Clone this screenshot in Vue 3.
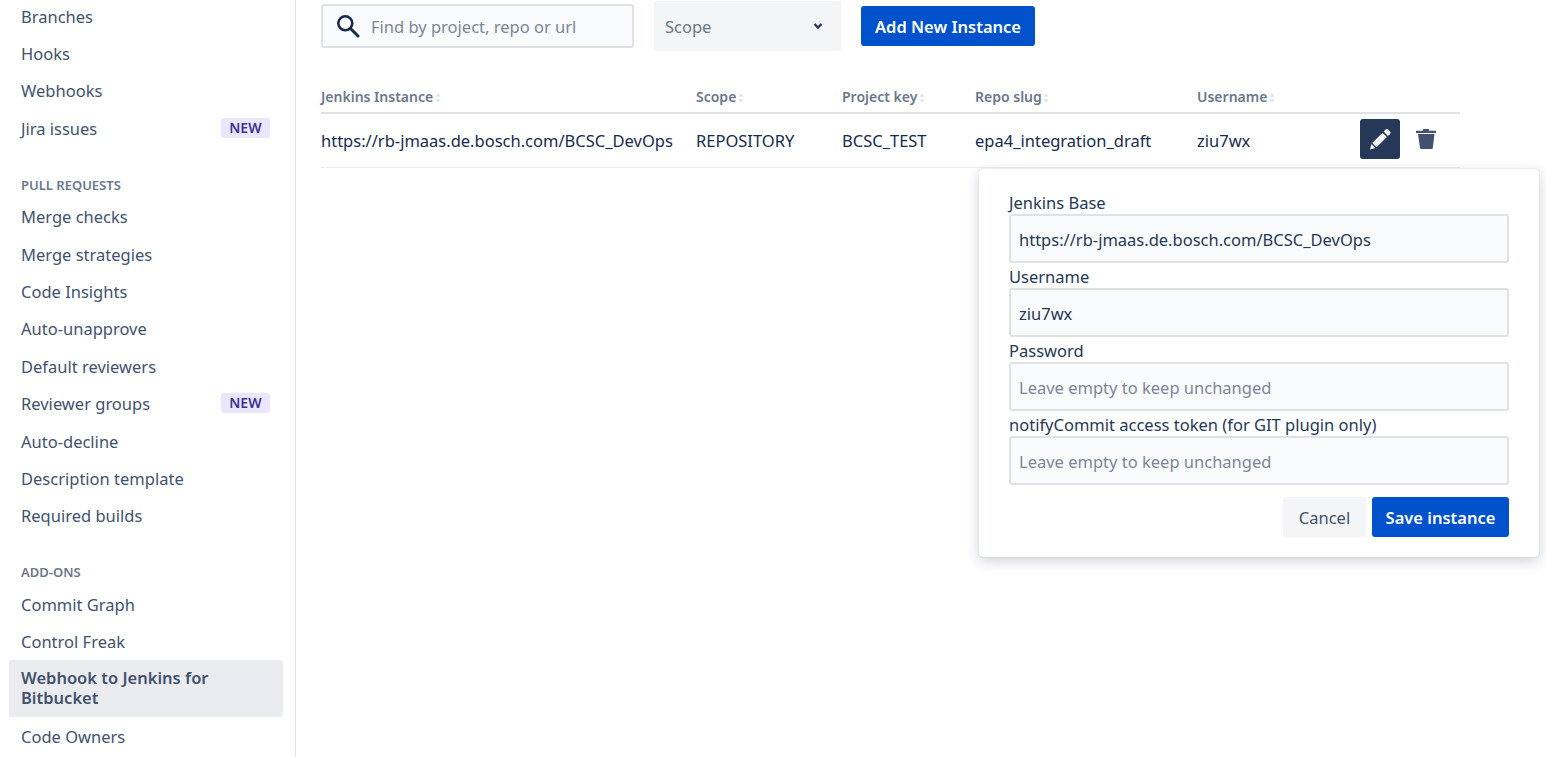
<template>
  <div class="page">
    <aside class="sidebar">
      <nav class="nav" v-for="group in navGroups" :key="group.title">
        <h4 v-if="group.title">{{ group.title }}</h4>
        <a
          v-for="item in group.items"
          :key="item.label"
          class="nav-item"
          :class="{ active: item.active }"
        >
          <span>{{ item.label }}</span>
          <span v-if="item.isNew" class="badge">NEW</span>
        </a>
      </nav>
    </aside>

    <main class="content">
      <div class="toolbar">
        <div class="search">
          <svg width="24" height="24" viewBox="0 0 24 24" fill="none" stroke="#172b4d" stroke-width="2.6">
            <circle cx="9.3" cy="9.3" r="7" />
            <path d="M14.800 14.800 22 22" stroke-linecap="round" stroke-width="3" />
          </svg>
          <span class="search-text">Find by project, repo or url</span>
        </div>
        <div class="scope">
          <span>Scope</span>
          <svg width="12" height="12" viewBox="0 0 12 12" fill="none" stroke="#253858" stroke-width="2.4">
            <path d="M2.500 4 6 7.500 9.500 4" />
          </svg>
        </div>
        <button class="btn primary add">Add New Instance</button>
      </div>

      <div class="table">
        <div class="row head">
          <div v-for="col in columns" :key="col" class="cell">
            {{ col }}
            <svg class="sort" width="6" height="10" viewBox="0 0 6 10" fill="#dfe1e6">
              <path d="M3 0.5 5.6 3.8H.4ZM3 9.5 .4 6.2H5.6Z" />
            </svg>
          </div>
          <div class="cell"></div>
        </div>
        <div class="row body">
          <div class="cell">https://rb-jmaas.de.bosch.com/BCSC_DevOps</div>
          <div class="cell">REPOSITORY</div>
          <div class="cell">BCSC_TEST</div>
          <div class="cell">epa4_integration_draft</div>
          <div class="cell">ziu7wx</div>
          <div class="cell actions">
            <button class="edit">
              <svg width="24" height="24" viewBox="0 0 24 24" fill="#f4f5f7">
                <path d="M15.600 4.600 17.700 2.600C18.400 1.900 19.400 1.900 20.100 2.600L22 4.500C22.700 5.200 22.700 6.200 22 6.900L20 8.900Z" />
                <path d="M14.500 5.700 18.900 10 8.600 20.300 4.200 15.900Z" />
                <path d="M3.400 17 7.400 21.100 2 22.400Z" />
              </svg>
            </button>
            <svg class="trash" width="20" height="20" viewBox="0 0 20 20" fill="#42526e">
              <path d="M7 .6C7 .2 7.300 0 7.700 0h4.600c.4 0 .7.2.7.6V1.800h7V4H0V1.800h7Z" />
              <path d="M2 5H18.500L16.800 19q-.1 1-1 1H5q-.9 0-1-1Z" />
            </svg>
          </div>
        </div>

        <form class="popup" @submit.prevent>
          <template v-for="field in fields" :key="field.label">
            <label>{{ field.label }}</label>
            <div class="input" :class="{ placeholder: !field.value }">
              {{ field.value || 'Leave empty to keep unchanged' }}
            </div>
          </template>
          <div class="popup-actions">
            <button class="btn cancel">Cancel</button>
            <button class="btn primary save">Save instance</button>
          </div>
        </form>
      </div>
    </main>
  </div>
</template>

<script setup>
const navGroups = [
  {
    title: '',
    items: [
      { label: 'Branches' },
      { label: 'Hooks' },
      { label: 'Webhooks' },
      { label: 'Jira issues', isNew: true }
    ]
  },
  {
    title: 'PULL REQUESTS',
    items: [
      { label: 'Merge checks' },
      { label: 'Merge strategies' },
      { label: 'Code Insights' },
      { label: 'Auto-unapprove' },
      { label: 'Default reviewers' },
      { label: 'Reviewer groups', isNew: true },
      { label: 'Auto-decline' },
      { label: 'Description template' },
      { label: 'Required builds' }
    ]
  },
  {
    title: 'ADD-ONS',
    items: [
      { label: 'Commit Graph' },
      { label: 'Control Freak' },
      { label: 'Webhook to Jenkins for Bitbucket', active: true },
      { label: 'Code Owners' }
    ]
  }
]

const columns = ['Jenkins Instance', 'Scope', 'Project key', 'Repo slug', 'Username']

const fields = [
  { label: 'Jenkins Base', value: 'https://rb-jmaas.de.bosch.com/BCSC_DevOps' },
  { label: 'Username', value: 'ziu7wx' },
  { label: 'Password', value: '' },
  { label: 'notifyCommit access token (for GIT plugin only)', value: '' }
]
</script>

<style>
html,
body {
  margin: 0;
  overflow: hidden;
  background: #fff;
}
</style>

<style scoped>
.page {
  display: flex;
  width: 1546px;
  height: 757px;
  overflow: hidden;
  font-family: "Noto Sans", "Open Sans", sans-serif;
  font-size: 16.5px;
  color: #172b4d;
}

.sidebar {
  box-sizing: border-box;
  width: 296px;
  flex: none;
  padding: 0 12px 0 9px;
  border-right: 1px solid #dfe1e6;
  margin-top: -2px;
}

.nav h4 {
  margin: 24px 0 0;
  padding: 0 12px;
  height: 27px;
  line-height: 27px;
  font-size: 13px;
  font-weight: 600;
  color: #6b778c;
}

.nav-item {
  display: flex;
  align-items: center;
  justify-content: space-between;
  box-sizing: border-box;
  min-height: 37.4px;
  padding: 8.5px 13px 8.5px 12px;
  line-height: 20px;
  color: #42526e;
  border-radius: 3px;
}

.nav-item.active {
  background: #ebecf0;
  font-weight: 600;
  margin: -1px 0 1px;
}

.badge {
  padding: 0 8.5px;
  height: 20px;
  line-height: 20px;
  margin: -1px 0 1px;
  font-size: 14px;
  font-weight: 600;
  color: #403294;
  background: #eae6ff;
  border-radius: 3px;
}

.content {
  flex: 1;
  padding: 1px 0 0 25px;
}

.toolbar {
  display: flex;
  align-items: center;
  height: 50px;
}

.search {
  box-sizing: border-box;
  display: flex;
  align-items: center;
  gap: 11px;
  width: 313px;
  height: 44px;
  padding: 0 13px;
  background: #fafbfc;
  border: 2px solid #dfe1e6;
  border-radius: 3px;
}

.search-text {
  color: #7a869a;
}

.scope {
  box-sizing: border-box;
  display: flex;
  align-items: center;
  justify-content: space-between;
  width: 187px;
  height: 50px;
  margin-left: 20px;
  padding: 0 17px 0 11px;
  color: #6b778c;
  background: #f4f5f7;
  border-radius: 3px;
}

.btn {
  height: 40px;
  padding: 0;
  border: none;
  border-radius: 3px;
  font-family: inherit;
  font-size: 16.5px;
}

.primary {
  color: #fff;
  font-weight: 600;
  background: #0052cc;
}

.add {
  width: 174px;
  margin-left: 20px;
}

.table {
  position: relative;
  width: 1139px;
  margin-top: 30px;
}

.row {
  display: grid;
  grid-template-columns: 375px 146px 133px 222px 163px 100px;
  align-items: center;
}

.head {
  height: 31px;
  border-bottom: 2px solid #dfe1e6;
  font-size: 14px;
  font-weight: 600;
  color: #6b778c;
}

.body {
  height: 52px;
  border-bottom: 1px solid #ebecf0;
  padding-bottom: 1px;
}

.sort {
  margin-left: -2px;
  vertical-align: -1px;
}

.actions {
  display: flex;
  align-items: center;
  gap: 16px;
  margin-bottom: 2px;
}

.edit {
  display: flex;
  align-items: center;
  justify-content: center;
  width: 40px;
  height: 40px;
  padding: 0;
  border: none;
  border-radius: 3px;
  background: #253858;
}

.popup {
  position: absolute;
  top: 88px;
  left: 658px;
  box-sizing: border-box;
  width: 560px;
  height: 388px;
  padding: 20px 30px 0;
  background: #fff;
  border-radius: 4px;
  box-shadow: 0 4px 14px rgba(9, 30, 66, 0.2), 0 0 1px rgba(9, 30, 66, 0.3);
}

.popup label {
  display: block;
  height: 25px;
  line-height: 27px;
  color: #253858;
}

.input {
  box-sizing: border-box;
  height: 49px;
  padding: 1px 8px 0;
  line-height: 45px;
  color: #253858;
  background: #fafbfc;
  border: 2px solid #dfe1e6;
  border-radius: 3px;
}

.input.placeholder {
  color: #7a869a;
}

.popup-actions {
  display: flex;
  justify-content: flex-end;
  gap: 6px;
  margin-top: 12px;
}

.cancel {
  width: 83px;
  color: #42526e;
  background: #f4f5f7;
}

.save {
  width: 137px;
}
</style>
